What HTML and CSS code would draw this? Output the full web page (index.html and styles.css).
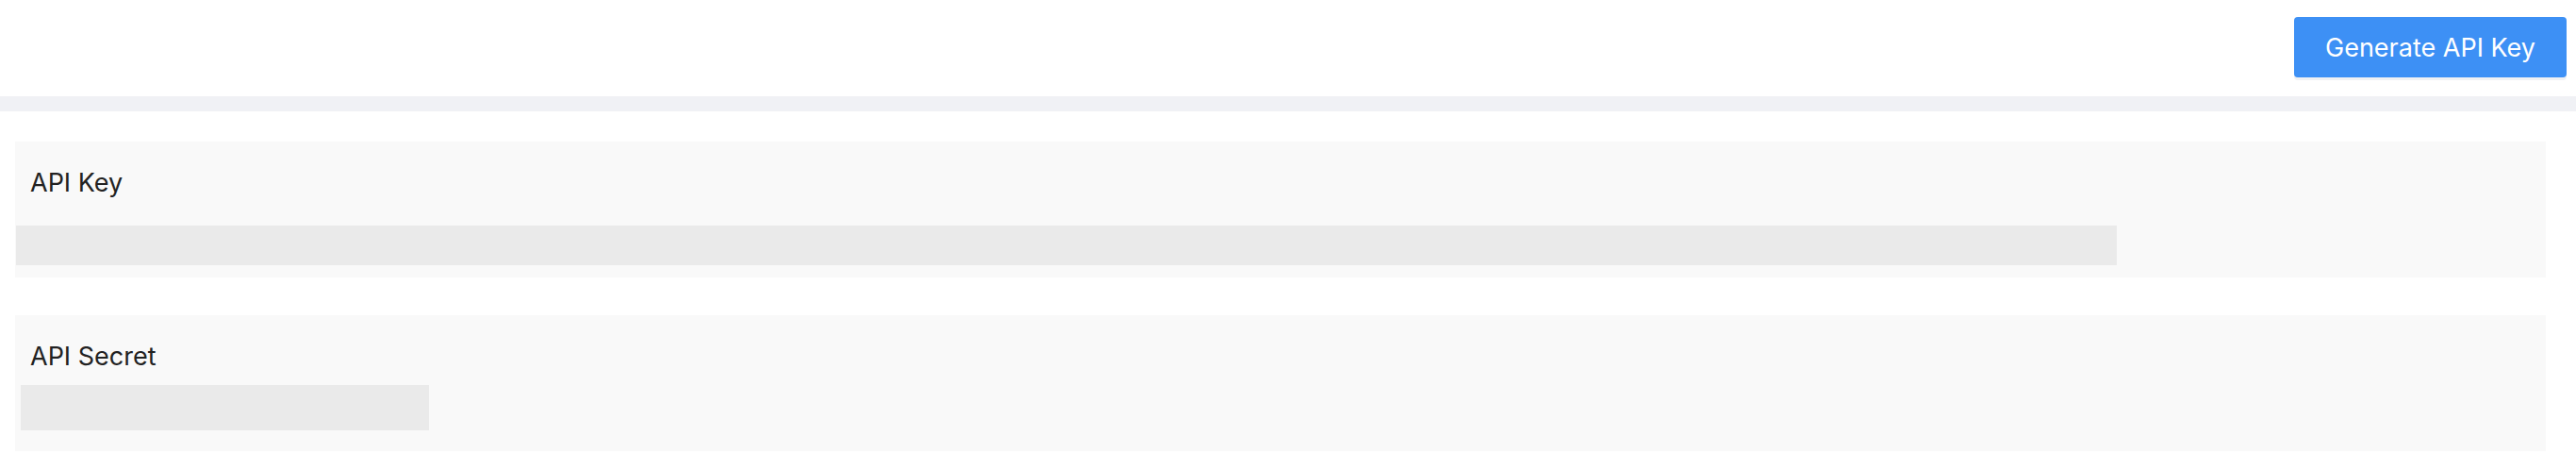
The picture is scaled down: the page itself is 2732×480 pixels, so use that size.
FILE: index.html
```html
<!DOCTYPE html>
<html>
<head>
<meta charset="utf-8">
<link rel="stylesheet" href="styles.css">
</head>
<body>
<header class="topbar">
  <button class="btn-primary">Generate API Key</button>
</header>
<div class="band"></div>
<main class="panel">
  <section class="field-card">
    <div class="field-label">API Key</div>
    <div class="skeleton skeleton-key"></div>
  </section>
  <section class="field-card">
    <div class="field-label">API Secret</div>
    <div class="skeleton skeleton-secret"></div>
  </section>
</main>
</body>
</html>
```
FILE: styles.css
```css
html, body {
  margin: 0;
  padding: 0;
  background: #ffffff;
  font-family: Inter, "Noto Sans", sans-serif;
  color: #222222;
}

.topbar {
  height: 102px;
  box-sizing: border-box;
  display: flex;
  justify-content: flex-end;
  align-items: flex-start;
  padding: 18px 10px 0 0;
}

.btn-primary {
  height: 64px;
  width: 289px;
  border: none;
  border-radius: 4px;
  background: #3d90f5;
  color: #ffffff;
  font-family: Inter, "Noto Sans", sans-serif;
  font-size: 27px;
  padding: 0;
  box-shadow: 0 3px 0 #f0f1f4;
  cursor: pointer;
}

.band {
  height: 16px;
  background: #f0f1f5;
}

.panel {
  background: #ffffff;
  border-radius: 6px 6px 0 0;
  padding: 32px 32px 0 16px;
  display: flex;
  flex-direction: column;
  gap: 40px;
}

.field-card {
  background: #f9f9f9;
  height: 144px;
  box-sizing: border-box;
  padding-top: 24px;
  display: flex;
  flex-direction: column;
  align-items: flex-start;
}

.field-label {
  font-size: 27px;
  line-height: 39px;
  padding-left: 16px;
  color: #222222;
}

.skeleton {
  background: #eaeaea;
}

.skeleton-key {
  margin: 26px 0 0 1px;
  width: 2228px;
  height: 42px;
}

.skeleton-secret {
  margin: 11px 0 0 6px;
  width: 433px;
  height: 48px;
}
```
